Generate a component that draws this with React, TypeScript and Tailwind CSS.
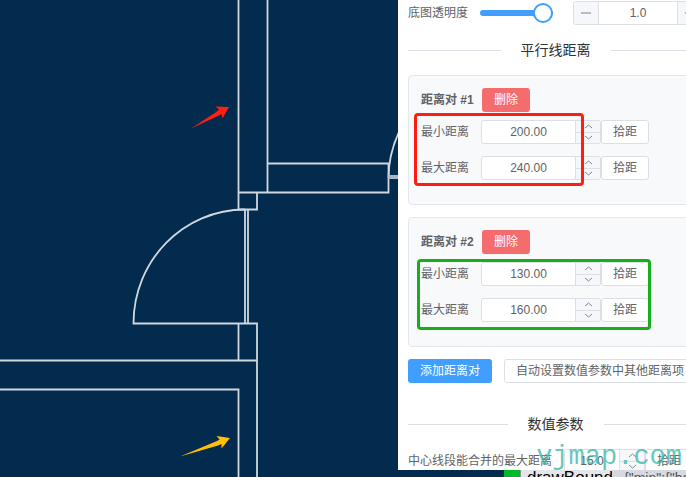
import { useState } from 'react';

interface Pair {
  id: number;
  min: string;
  max: string;
  mark: string;
}

const initialPairs: Pair[] = [
  { id: 1, min: '200.00', max: '240.00', mark: 'left-[5px] top-[37px] w-[170px] h-[73px] border-[#ff1d12]' },
  { id: 2, min: '130.00', max: '160.00', mark: 'left-2 top-[41px] w-[234px] h-[71px] border-[#17ad1b]' },
];

const plainButton = 'h-6 shrink-0 rounded-[3px] border border-[#dcdfe6] bg-white px-[11px] text-[12px] leading-none whitespace-nowrap';

function Divider({ title }: { title: string }) {
  return (
    <div className="flex items-center gap-5">
      <div className="h-px flex-1 bg-[#dcdfe6]" />
      <h2 className="text-[14px] leading-5 text-[#303133]">{title}</h2>
      <div className="h-px flex-1 bg-[#dcdfe6]" />
    </div>
  );
}

function Arrow({ d }: { d: string }) {
  return (
    <svg width="9" height="5" viewBox="0 0 9 5" fill="none" stroke="#85888e" strokeWidth="1">
      <path d={d} />
    </svg>
  );
}

interface NumberFieldProps {
  id: string;
  value: string;
  onChange: (value: string) => void;
  width?: string;
}

function NumberField({ id, value, onChange, width = 'w-[120px]' }: NumberFieldProps) {
  const step = (delta: number) => onChange((Number(value) + delta).toFixed(value.split('.')[1]?.length ?? 0));
  return (
    <div className={`flex h-6 shrink-0 overflow-hidden rounded-[3px] border border-[#dcdfe6] bg-white ${width}`}>
      <input
        id={id}
        value={value}
        onChange={(e) => onChange(e.target.value)}
        className="w-0 flex-1 text-center text-[12px] outline-none"
      />
      <div className="flex w-[25px] flex-col border-l border-[#dcdfe6] bg-[#f5f7fa]">
        <button type="button" aria-label="+" onClick={() => step(1)} className="flex flex-1 items-center justify-center border-b border-[#dcdfe6]">
          <Arrow d="M1 4L4.5 1L8 4" />
        </button>
        <button type="button" aria-label="-" onClick={() => step(-1)} className="flex flex-1 items-center justify-center">
          <Arrow d="M1 1L4.5 4L8 1" />
        </button>
      </div>
    </div>
  );
}

function DistanceRow({ id, label, value, onChange }: NumberFieldProps & { label: string }) {
  return (
    <div className="flex h-6 items-center">
      <label htmlFor={id} className="w-[60px] shrink-0">{label}</label>
      <NumberField id={id} value={value} onChange={onChange} />
      <button type="button" className={plainButton}>拾距</button>
    </div>
  );
}

function FloorPlan() {
  return (
    <svg className="absolute inset-0 h-full w-full" viewBox="0 0 398 477" preserveAspectRatio="xMinYMin slice" fill="none">
      <g stroke="#cfd8df" strokeWidth="1.8">
        <path d="M238.5 0V209.5H257V192.5" />
        <path d="M267.5 0V192.5M238.5 192.5H388.5V163.5H267.5" />
        <path d="M245 209.5V323.5M248 209.5V323.5" />
        <path d="M245 209.5C184 209.5 133.5 260 133.5 323.5H257V477" />
        <path d="M238.5 323.5V360.5M0 360.5H257M0 389.5H238.5V477" />
        <path d="M388.5 178C388.5 163 392 147 399 132" />
      </g>
      <rect x="388.5" y="175" width="10" height="4" fill="#a9b7c3" />
      <path d="M191 128.5L217 111.5L219 109.5L215.5 106.5L229 107L222.5 118.5L221.5 114L218 116Z" fill="#ff1e10" />
      <path d="M180 456.5L217 441L219.5 439.5L216.5 436L230 438L221.5 448.5L221.5 444L218 445.5Z" fill="#ffc000" />
    </svg>
  );
}

export default function App() {
  const [opacity, setOpacity] = useState('1.0');
  const [pairs, setPairs] = useState(initialPairs);
  const [merge, setMerge] = useState('15.0');

  const update = (id: number, patch: Partial<Pair>) =>
    setPairs(pairs.map((p) => (p.id === id ? { ...p, ...patch } : p)));

  return (
    <div className="flex h-screen overflow-hidden bg-[#032b4e] font-['Liberation_Sans','Noto_Sans_CJK_SC',sans-serif] text-[12px] text-[#606266]">
      <main className="relative flex-1 overflow-hidden">
        <FloorPlan />
      </main>

      <aside className="relative flex w-72 flex-col overflow-hidden">
        <div className="min-h-0 flex-1 overflow-hidden bg-white">
          <div className="flex min-w-[315px] flex-col px-[10px] pt-px">
            <div className="flex h-6 items-center">
              <label htmlFor="opacity" className="w-[72px] shrink-0">底图透明度</label>
              <input
                id="opacity"
                type="range"
                min="0"
                max="1"
                step="0.1"
                value={opacity}
                onChange={(e) => setOpacity(Number(e.target.value).toFixed(1))}
                className="h-[6px] w-[73px] shrink-0 appearance-none rounded-full bg-[#409eff] [&::-webkit-slider-thumb]:size-5 [&::-webkit-slider-thumb]:appearance-none [&::-webkit-slider-thumb]:rounded-full [&::-webkit-slider-thumb]:border-2 [&::-webkit-slider-thumb]:border-[#409eff] [&::-webkit-slider-thumb]:bg-white"
              />
              <div className="ml-5 flex h-6 w-[130px] shrink-0 overflow-hidden rounded-[3px] border border-[#dcdfe6]">
                <button type="button" aria-label="-" className="flex w-[25px] items-center justify-center border-r border-[#dcdfe6] bg-[#f5f7fa]">
                  <svg width="10" height="10" stroke="#b9bcc3" strokeWidth="2"><path d="M0 5H10" /></svg>
                </button>
                <input aria-label="底图透明度" value={opacity} onChange={(e) => setOpacity(e.target.value)} className="w-0 flex-1 text-center outline-none" />
                <button type="button" aria-label="+" className="flex w-[25px] items-center justify-center border-l border-[#dcdfe6] bg-[#f5f7fa]">
                  <svg width="10" height="10" stroke="#b9bcc3" strokeWidth="2"><path d="M0 5H10M5 0V10" /></svg>
                </button>
              </div>
            </div>

            <div className="py-[15px]">
              <Divider title="平行线距离" />
            </div>

            <div className="flex flex-col gap-3">
              {pairs.map((pair) => (
                <section key={pair.id} className="relative h-[130px] rounded-[4px] border border-[#e4e7ed] bg-[#f8f9fb] p-3">
                  <div className="mb-2 flex items-center">
                    <h3 className="w-[61px] font-bold">距离对 #{pair.id}</h3>
                    <button
                      type="button"
                      onClick={() => setPairs(pairs.filter((p) => p.id !== pair.id))}
                      className="h-6 rounded-[3px] bg-[#f56c6c] px-3 text-white"
                    >
                      删除
                    </button>
                  </div>
                  <div className="flex flex-col gap-3">
                    <DistanceRow id={`min-${pair.id}`} label="最小距离" value={pair.min} onChange={(min) => update(pair.id, { min })} />
                    <DistanceRow id={`max-${pair.id}`} label="最大距离" value={pair.max} onChange={(max) => update(pair.id, { max })} />
                  </div>
                  <div className={`pointer-events-none absolute rounded-[4px] border-[3px] ${pair.mark}`} />
                </section>
              ))}
            </div>

            <div className="mt-3 flex gap-3">
              <button type="button" className="h-6 shrink-0 rounded-[3px] bg-[#409eff] px-3 text-white">添加距离对</button>
              <button type="button" className={plainButton}>自动设置数值参数中其他距离项</button>
            </div>

            <div className="pt-[31px] pb-[15px]">
              <Divider title="数值参数" />
            </div>

            <div className="flex h-6 items-center">
              <label htmlFor="merge" className="w-[156px] shrink-0">中心线段能合并的最大距离</label>
              <NumberField id="merge" value={merge} onChange={setMerge} width="w-[81px]" />
              <button type="button" className={plainButton}>拾距</button>
            </div>
          </div>
        </div>

        <div className="flex h-[7px] shrink-0 overflow-hidden text-[16px] leading-4">
          <div className="w-[106px] shrink-0" />
          <div className="w-4 shrink-0 bg-[#00b828]" />
          <div className="w-[92px] shrink-0 overflow-hidden border-l border-[#8d9298] bg-[#e4e6ea] pl-[6px] text-[17px] text-black">drawBounds</div>
          <div className="flex-1 overflow-hidden bg-[#d6dae0] pl-3 text-[14px] whitespace-nowrap text-[#555]">{'{"min":{"hd":'}</div>
        </div>

        <div className="pointer-events-none absolute right-1 bottom-1 font-['Liberation_Mono',monospace] text-[27px] leading-8 text-[#3cb9aa]/80">
          vjmap.com
        </div>
      </aside>
    </div>
  );
}
